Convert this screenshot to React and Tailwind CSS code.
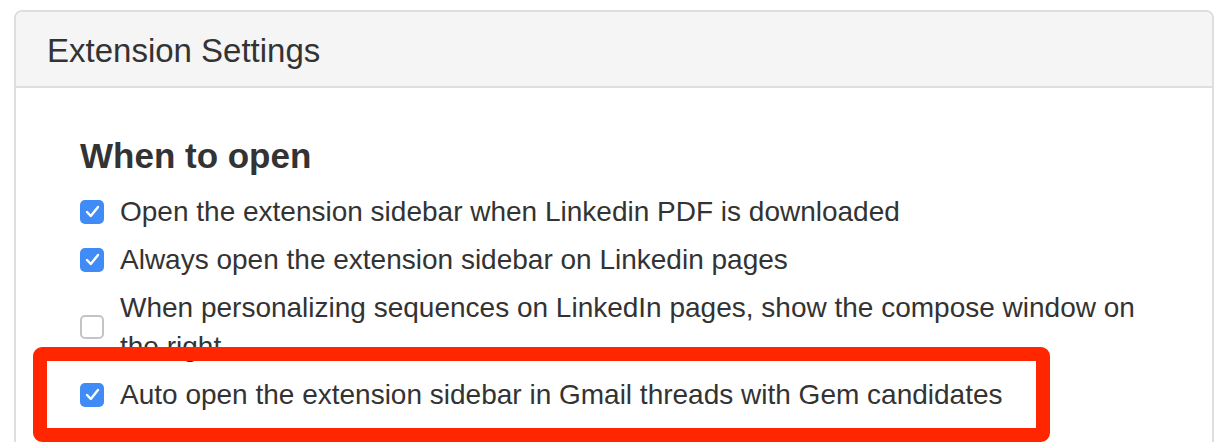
import React, { useState } from 'react';

const options = [
  { id: 'pdf', label: 'Open the extension sidebar when Linkedin PDF is downloaded', checked: true },
  { id: 'always', label: 'Always open the extension sidebar on Linkedin pages', checked: true },
  {
    id: 'compose',
    label: 'When personalizing sequences on LinkedIn pages, show the compose window on the right',
    checked: false,
  },
  { id: 'gmail', label: 'Auto open the extension sidebar in Gmail threads with Gem candidates', checked: true },
];

const Checkbox = ({ checked, onChange }) => (
  <button
    onClick={onChange}
    className={
      checked
        ? 'flex h-[24px] w-[24px] shrink-0 items-center justify-center rounded-[5px] bg-[#3f8cf6]'
        : 'flex h-[24px] w-[24px] shrink-0 items-center justify-center rounded-[5px] border-2 border-[#c4c4c4] bg-white'
    }
  >
    {checked && (
      <svg width="15" height="13" viewBox="0 0 15 13" fill="none">
        <path d="M2 7l3.8 4L13 2" stroke="white" strokeWidth="2.4" strokeLinecap="round" strokeLinejoin="round" />
      </svg>
    )}
  </button>
);

const App = () => {
  const [settings, setSettings] = useState(options);

  const toggle = (id) => {
    setSettings(settings.map((s) => (s.id === id ? { ...s, checked: !s.checked } : s)));
  };

  return (
    <div className="h-[442px] w-[1230px] overflow-hidden bg-white pl-[14px] pr-[16px] pt-[10px] font-['Liberation_Sans',Arial,sans-serif] text-[#333]">
      <div className="relative h-[600px] rounded-t-[8px] border-2 border-[#dedede]">
        <div className="flex h-[76px] items-center rounded-t-[6px] border-b-2 border-[#dedede] bg-[#f5f5f5] pl-[31px]">
          <h2 className="pt-[2px] text-[33px] leading-none">Extension Settings</h2>
        </div>

        <div className="pl-[64px] pr-[40px] pt-[48px]">
          <h3 className="mb-[16px] text-[35px] font-bold leading-[40px]">When to open</h3>
          <ul className="flex flex-col gap-[9px]">
            {settings.map((s) => (
              <li key={s.id} className="flex items-center gap-[16px]">
                <Checkbox checked={s.checked} onChange={() => toggle(s.id)} />
                <span className="text-[28px] leading-[39px]">{s.label}</span>
              </li>
            ))}
          </ul>
        </div>

        <div className="absolute left-[17px] top-[335px] h-[95px] w-[1017px] rounded-[9px] border-[14px] border-[#ff2600]" />
      </div>
    </div>
  );
};

export default App;
